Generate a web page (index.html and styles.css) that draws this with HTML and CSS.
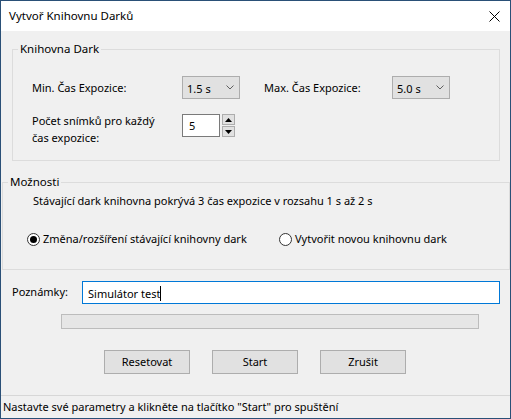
FILE: index.html
```html
<!DOCTYPE html>
<html lang="cs">
<head>
<meta charset="utf-8">
<title>Vytvoř Knihovnu Darků</title>
<link rel="stylesheet" href="styles.css">
</head>
<body>
<div class="window">
  <div class="titlebar">
    <span class="title">Vytvoř Knihovnu Darků</span>
    <svg class="close" width="11" height="11" viewBox="0 0 11 11"><path d="M0.5 0.5 L10.5 10.5 M10.5 0.5 L0.5 10.5" stroke="#000" stroke-width="1" fill="none"/></svg>
  </div>
  <div class="content">
    <fieldset class="grp grp-dark">
      <legend>Knihovna Dark</legend>
      <div class="grp-body">
        <div class="row row-times">
          <span class="lbl lbl-min">Min. Čas Expozice:</span>
          <div class="combo"><span class="combo-val">1.5 s</span><svg class="chev" width="8" height="5" viewBox="0 0 8 5"><path d="M0.5 0.5 L4 4 L7.5 0.5" stroke="#606060" fill="none"/></svg></div>
          <span class="lbl lbl-max">Max. Čas Expozice:</span>
          <div class="combo"><span class="combo-val">5.0 s</span><svg class="chev" width="8" height="5" viewBox="0 0 8 5"><path d="M0.5 0.5 L4 4 L7.5 0.5" stroke="#606060" fill="none"/></svg></div>
        </div>
        <div class="row row-count">
          <span class="lbl lbl-count">Počet snímků pro každý<br>čas expozice:</span>
          <div class="spin">
            <div class="spin-input">5</div>
            <div class="spin-btns">
              <div class="sb"><svg width="7" height="4" viewBox="0 0 7 4"><path d="M3.5 0 L7 4 L0 4 Z" fill="#000"/></svg></div>
              <div class="sb"><svg width="7" height="4" viewBox="0 0 7 4"><path d="M0 0 L7 0 L3.5 4 Z" fill="#000"/></svg></div>
            </div>
          </div>
        </div>
      </div>
    </fieldset>
    <fieldset class="grp grp-opt">
      <legend>Možnosti</legend>
      <div class="grp-body">
        <p class="info">Stávající dark knihovna pokrývá 3 čas expozice v rozsahu 1 s až 2 s</p>
        <div class="radios">
          <label class="radio radio-a"><span class="dot checked"></span>Změna/rozšíření stávající knihovny dark</label>
          <label class="radio radio-b"><span class="dot"></span>Vytvořit novou knihovnu dark</label>
        </div>
      </div>
    </fieldset>
    <div class="notes">
      <span class="notes-lbl">Poznámky:</span>
      <div class="notes-input">Simulátor test<span class="caret"></span></div>
    </div>
    <div class="progress"></div>
    <div class="buttons">
      <div class="btn">Resetovat</div>
      <div class="btn">Start</div>
      <div class="btn">Zrušit</div>
    </div>
    <div class="status">Nastavte své parametry a klikněte na tlačítko "Start" pro spuštění</div>
  </div>
</div>
</body>
</html>
```
FILE: styles.css
```css
* { box-sizing: border-box; }
html, body { margin: 0; padding: 0; }
body {
  font-family: "Noto Sans", "Open Sans", sans-serif;
  font-size: 11px;
  color: #000;
  background: #f0f0f0;
}
.window {
  width: 511px;
  height: 419px;
  border: 1px solid #2a5077;
  display: flex;
  flex-direction: column;
  background: #f0f0f0;
}
.titlebar {
  height: 30px;
  background: #fff;
  display: flex;
  align-items: center;
  justify-content: space-between;
  padding: 0 10px 0 8px;
  flex: none;
}
.title { font-size: 11.5px; line-height: 16px; }
.close { display: block; }
.content {
  flex: 1;
  display: flex;
  flex-direction: column;
}
.grp {
  border: 1px solid #dcdcdc;
  margin: 0;
  padding: 0;
  min-width: 0;
}
.grp legend {
  padding: 0 2px;
  margin-left: 5px;
  line-height: 16px;
  font-size: 11.5px;
}
.grp-dark {
  margin: 10px 0 0 11px;
  width: 488px;
  height: 120px;
}
.grp-dark .grp-body { padding: 19px 0 0 19px; }
.row { display: flex; }
.row-times { align-items: center; height: 23px; }
.lbl { line-height: 16px; }
.lbl-min { width: 150px; }
.lbl-max { width: 128px; margin-left: 24px; }
.combo {
  width: 58px;
  height: 23px;
  background: #e1e1e1;
  border: 1px solid #adadad;
  display: flex;
  align-items: center;
  justify-content: space-between;
  padding: 0 5px 0 4px;
}
.combo-val { line-height: 16px; padding-top: 2px; }
.chev { display: block; }
.row-count { margin-top: 15px; align-items: flex-start; }
.lbl-count { width: 150px; line-height: 17px; margin-top: -2px; }
.spin { display: flex; }
.spin-input {
  width: 38px;
  height: 23px;
  background: #fff;
  border: 1px solid #7a7a7a;
  padding: 2px 0 0 6px;
  line-height: 17px;
}
.spin-btns {
  display: flex;
  flex-direction: column;
  gap: 1px;
  margin-left: 2px;
}
.sb {
  width: 13px;
  height: 11px;
  background: #e1e1e1;
  border: 1px solid #adadad;
  display: flex;
  align-items: center;
  justify-content: center;
}
.sb svg { display: block; }
.grp-opt {
  margin: 13px 0 0 1px;
  width: 508px;
  height: 96px;
}
.grp-opt .grp-body { padding-left: 30px; }
.info { margin: 3px 0 0 0; line-height: 16px; }
.radios { display: flex; margin-top: 22px; margin-left: -6px; }
.radio { display: flex; align-items: center; line-height: 16px; }
.radio-a { width: 252px; }
.dot {
  width: 13px;
  height: 13px;
  border: 1px solid #333;
  border-radius: 50%;
  background: #fff;
  margin-right: 3px;
  display: flex;
  align-items: center;
  justify-content: center;
}
.dot.checked::after {
  content: "";
  width: 7px;
  height: 7px;
  border-radius: 50%;
  background: #000;
}
.notes {
  display: flex;
  align-items: center;
  margin: 11px 0 0 11px;
  height: 23px;
}
.notes-lbl { width: 70px; line-height: 16px; margin-top: -2px; }
.notes-input {
  width: 418px;
  height: 23px;
  background: #fff;
  border: 1px solid #0078d7;
  padding: 2px 0 0 5px;
  line-height: 17px;
  display: flex;
  align-items: center;
}
.caret {
  display: inline-block;
  width: 1px;
  height: 15px;
  background: #000;
}
.progress {
  margin: 10px 0 0 60px;
  width: 418px;
  height: 15px;
  background: #e6e6e6;
  border: 1px solid #bcbcbc;
}
.buttons {
  display: flex;
  gap: 22px;
  margin: 21px 0 0 103px;
}
.btn {
  width: 86px;
  height: 24px;
  background: #e1e1e1;
  border: 1px solid #adadad;
  display: flex;
  align-items: center;
  justify-content: center;
  line-height: 16px;
}
.status {
  margin-top: 21px;
  border-top: 1px solid #d7d7d7;
  height: 23px;
  padding: 3px 0 0 2px;
  line-height: 16px;
}
```
